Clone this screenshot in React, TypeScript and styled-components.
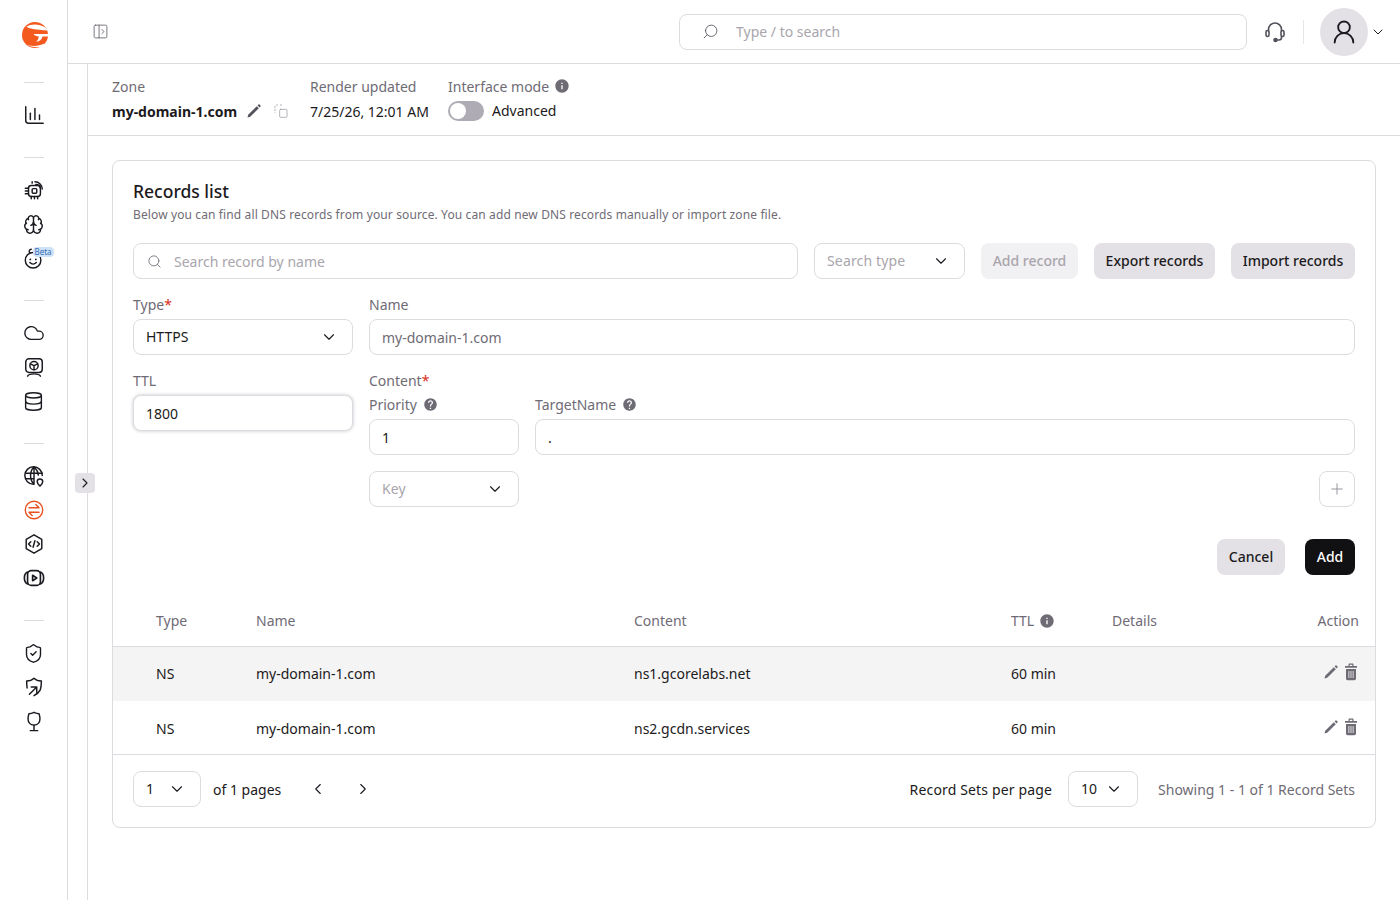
import React from 'react'
import styled, { createGlobalStyle } from 'styled-components'
import { Brain, ChevronDown, ChevronLeft, ChevronRight, Cloud, Database, Plus, Search, ShieldCheck, UserRound } from 'lucide-react'
import { MdHelp, MdInfo } from 'react-icons/md'

const GlobalStyle = createGlobalStyle`
    html, body {
        margin: 0;
        padding: 0;
        background: #fff;
    }
    body {
        font-family: 'Noto Sans', 'Open Sans', sans-serif;
        font-size: 14px;
        color: #1c1a20;
    }
    * {
        box-sizing: border-box;
    }
`

const Glyph: React.FC<{ size?: number; width?: number; children: React.ReactNode }> = ({ size = 22, width = 1.6, children }) => (
    <svg width={size} height={size} viewBox="0 0 24 24" fill="none" stroke="currentColor" strokeWidth={width} strokeLinecap="round" strokeLinejoin="round">
        {children}
    </svg>
)

const Logo = () => (
    <svg width="28" height="30" viewBox="0 0 28 30">
        <circle cx="14" cy="15" r="13" fill="#f4591d" />
        <path d="M5.500 6.500C10 3.800 18 3.500 24.500 7.500 25.500 8.500 26 9.500 26.500 10.500 21 10 16 9.500 12 9 9.500 8.500 7 8 5.500 6.500z" fill="#fff" />
        <path d="M12.500 14h15.500v2.500h-6.500c-.5 3-3 5-6.500 5.500 1.500-1 2.500-3 2.800-5.500-2.300 0-4.300-1-5.300-2.500z" fill="#fff" />
        <path d="M4.500 24C9 26.500 17 26.800 23.500 23.500L22 26.500C17 27.800 10 27.500 4.500 24z" fill="#fff" />
    </svg>
)

const ChartIcon = () => (
    <Glyph>
        <path d="M3 3v15a3 3 0 0 0 3 3h16" />
        <path d="M8 17V10" />
        <path d="M13 17V5" />
        <path d="M18 17v-5" />
    </Glyph>
)

const ChipIcon = () => (
    <Glyph>
        <rect x="6" y="7" width="13" height="12" rx="3" />
        <rect x="10" y="10.500" width="5" height="5" rx="1" />
        <path d="M2.500 10H6M2.500 13H6M2.500 16H6M9 19v2.500M12.500 19v2.500M16 19v2.500" />
        <path d="M10 4.500V3M13 3a8 8 0 0 1 8 8M14 6a5 5 0 0 1 5 4" />
    </Glyph>
)

const SmileIcon = () => (
    <Glyph>
        <circle cx="11" cy="14.500" r="8.500" />
        <path d="M7.500 6.500C6 4.500 7 2.500 9 2.500" />
        <path d="M7.500 17c2 2 5 2 7 0" />
        <path d="M8 13.500v.01M14 13.500v.01" strokeWidth="2" />
    </Glyph>
)

const ScreenIcon = () => (
    <Glyph>
        <rect x="3" y="3" width="18" height="15" rx="3.500" />
        <circle cx="12" cy="10.500" r="4.500" />
        <path d="M8 8.500l4 2 4-2M12 10.500V15" />
        <path d="M5 22c1-2 3-2.500 7-2.500s6 .5 7 2.500" />
    </Glyph>
)

const GlobePinIcon = () => (
    <Glyph>
        <path d="M21 11.500A9.500 9.500 0 1 0 11.500 21" />
        <path d="M12 2c-5 5-5 14 0 19M12 2c3 3 4.500 6 4.700 9M3 9h18M3 15h9M12 2v19" />
        <path d="M18.500 23s3-2.500 3-4.700a3 3 0 0 0-6 0c0 2.200 3 4.700 3 4.700z" fill="#fff" />
    </Glyph>
)

const ExchangeIcon = () => (
    <Glyph width={1.5}>
        <circle cx="12" cy="12" r="9.500" />
        <path d="M6.500 9.500h11L14 6" />
        <path d="M17.500 14.500h-11L10 18" />
    </Glyph>
)

const HexCodeIcon = () => (
    <Glyph>
        <path d="M12 2l8.500 5v10L12 22l-8.500-5V7z" />
        <path d="M8.500 9.500L6 12l2.500 2.500M15.500 9.500L18 12l-2.500 2.500M13 8.500l-2 7" />
    </Glyph>
)

const PlayIcon = () => (
    <Glyph width={1.8}>
        <rect x="5" y="4" width="14" height="16" rx="4" />
        <path d="M10.500 9v6l4.500-3z" />
        <path d="M5 5.500C2.500 6.500 1.500 8 1.500 12s1 5.500 3.500 6.500M19 5.500c2.500 1 3.500 2.500 3.500 6.500s-1 5.500-3.500 6.500" />
    </Glyph>
)

const ShieldArrowIcon = () => (
    <Glyph>
        <path d="M4.500 13C4 10 4 7.500 4 5.500c3 0 6-1 8-3 2 2 5 3 8 3 0 9-1 12-8 16" />
        <path d="M7 20l8-8M9 12h6v6" />
    </Glyph>
)

const BalloonIcon = () => (
    <Glyph>
        <path d="M12 16.500c-4 0-6.500-3-6.500-7 0-2 .5-4 1-5.500 2 0 3.500-.5 5.500-1.500 2 1 3.500 1.500 5.500 1.500.5 1.500 1 3.500 1 5.500 0 4-2.500 7-6.500 7z" />
        <path d="M12 16.500v6M8 22.500h8" />
    </Glyph>
)

const PanelIcon = () => (
    <Glyph size={17} width={1.3}>
        <rect x="3" y="3" width="18" height="18" rx="2" />
        <path d="M10 3v18M14 9l3 3-3 3" />
    </Glyph>
)

const HeadsetIcon = () => (
    <Glyph size={24} width={1.6}>
        <path d="M5.500 11V9.500a6.500 6.500 0 0 1 13 0V11" />
        <rect x="3" y="10.500" width="3" height="6" rx="1.500" />
        <rect x="18" y="10.500" width="3" height="6" rx="1.500" />
        <path d="M18.500 16.500v1a2.500 2.500 0 0 1-2.500 2.500h-2" />
        <circle cx="12.500" cy="20" r="1.500" fill="currentColor" />
    </Glyph>
)

const CopyIcon = () => (
    <Glyph size={16} width={1}>
        <rect x="10" y="9.500" width="11" height="12" rx="1.500" />
        <path d="M7 3H5.500A2.500 2.500 0 0 0 3 5.500V14" strokeDasharray="2 2.500" />
        <path d="M11 3h3" strokeDasharray="2 2" />
    </Glyph>
)

const PencilIcon = () => (
    <svg width="16" height="16" viewBox="0 0 16 16" fill="currentColor">
        <path d="M1.500 14.500l.7-2.700L10.800 3.200l2 2-8.600 8.600z" />
        <path d="M11.600 2.400l.9-.9c.3-.3.7-.3 1 0l1 1c.3.3.3.7 0 1l-.9.9z" />
    </svg>
)

const TrashIcon = () => (
    <svg width="16" height="18" viewBox="0 0 16 18" fill="currentColor">
        <path d="M5.500 1.500c0-.6.4-1 1-1h3c.6 0 1 .4 1 1V3H14v1.700H2V3h3.500zM6.700 1.700V3h2.600V1.700z" />
        <path fillRule="evenodd" d="M3 6h10v9.500c0 1-.7 1.700-1.700 1.700H4.700C3.700 17.200 3 16.500 3 15.500zM5.500 8v7h.8V8zM7.600 8v7h.8V8zM9.700 8v7h.8V8z" />
    </svg>
)

const groups: React.ReactNode[][] = [
    [<ChartIcon />],
    [<ChipIcon />, <Brain size={21} strokeWidth={1.6} />, <SmileIcon />],
    [<Cloud size={22} strokeWidth={1.5} />, <ScreenIcon />, <Database size={21} strokeWidth={1.6} />],
    [<GlobePinIcon />, <ExchangeIcon />, <HexCodeIcon />, <PlayIcon />],
    [<ShieldCheck size={21} strokeWidth={1.6} />, <ShieldArrowIcon />, <BalloonIcon />],
]

const records = [
    { type: 'NS', name: 'my-domain-1.com', content: 'ns1.gcorelabs.net', ttl: '60 min' },
    { type: 'NS', name: 'my-domain-1.com', content: 'ns2.gcdn.services', ttl: '60 min' },
]

const App: React.FC = () => {
    return (
        <>
            <GlobalStyle />
            <Shell>
                <Sidebar>
                    <LogoSlot>
                        <Logo />
                    </LogoSlot>
                    {groups.map((icons, i) => (
                        <React.Fragment key={i}>
                            <SideDivider />
                            <SideGroup>
                                {icons.map((icon, j) => (
                                    <SideItem key={j} $active={i === 3 && j === 1}>
                                        {icon}
                                        {i === 1 && j === 2 && <BetaBadge>Beta</BetaBadge>}
                                    </SideItem>
                                ))}
                            </SideGroup>
                        </React.Fragment>
                    ))}
                </Sidebar>
                <Main>
                    <TopBar>
                        <PanelToggle>
                            <PanelIcon />
                        </PanelToggle>
                        <TopSearch>
                            <FlippedIcon>
                                <Search size={17} strokeWidth={1.2} />
                            </FlippedIcon>
                            <TopSearchInput placeholder="Type / to search" readOnly />
                        </TopSearch>
                        <SupportButton>
                            <HeadsetIcon />
                        </SupportButton>
                        <TopSeparator />
                        <Avatar>
                            <UserRound size={28} strokeWidth={1.6} />
                        </Avatar>
                        <AvatarCaret>
                            <ChevronDown size={16} strokeWidth={1.5} />
                        </AvatarCaret>
                    </TopBar>
                    <Body>
                        <Gutter>
                            <CollapseButton>
                                <ChevronRight size={16} strokeWidth={1.6} />
                            </CollapseButton>
                        </Gutter>
                        <Content>
                            <InfoBar>
                                <InfoColumn $width={198}>
                                    <InfoLabel>Zone</InfoLabel>
                                    <InfoValue>
                                        <ZoneName>my-domain-1.com</ZoneName>
                                        <EditGlyph>
                                            <PencilIcon />
                                        </EditGlyph>
                                        <CopyGlyph>
                                            <CopyIcon />
                                        </CopyGlyph>
                                    </InfoValue>
                                </InfoColumn>
                                <InfoColumn $width={138}>
                                    <InfoLabel>Render updated</InfoLabel>
                                    <InfoValue>7/25/26, 12:01 AM</InfoValue>
                                </InfoColumn>
                                <InfoColumn>
                                    <InfoLabel>
                                        Interface mode
                                        <HintIcon>
                                            <MdInfo size={16} />
                                        </HintIcon>
                                    </InfoLabel>
                                    <InfoValue>
                                        <Toggle>
                                            <ToggleKnob />
                                        </Toggle>
                                        <ToggleText>Advanced</ToggleText>
                                    </InfoValue>
                                </InfoColumn>
                            </InfoBar>
                            <Page>
                                <Card>
                                    <CardHead>
                                        <CardTitle>Records list</CardTitle>
                                        <CardText>Below you can find all DNS records from your source. You can add new DNS records manually or import zone file.</CardText>
                                    </CardHead>
                                    <Toolbar>
                                        <SearchField>
                                            <Search size={15} strokeWidth={1.4} />
                                            <BareInput placeholder="Search record by name" readOnly />
                                        </SearchField>
                                        <SelectBox $width={151} $muted>
                                            Search type
                                            <ChevronDown size={18} strokeWidth={1.5} />
                                        </SelectBox>
                                        <ActionButton $width={97} $variant="disabled">Add record</ActionButton>
                                        <ActionButton $width={121}>Export records</ActionButton>
                                        <ActionButton $width={124}>Import records</ActionButton>
                                    </Toolbar>
                                    <FormRow>
                                        <LeftField>
                                            <FieldLabel>
                                                Type<Required>*</Required>
                                            </FieldLabel>
                                            <SelectBox>
                                                HTTPS
                                                <ChevronDown size={18} strokeWidth={1.5} />
                                            </SelectBox>
                                        </LeftField>
                                        <GrowField>
                                            <FieldLabel>Name</FieldLabel>
                                            <TextInput value="my-domain-1.com" $muted readOnly />
                                        </GrowField>
                                    </FormRow>
                                    <FormRow>
                                        <LeftField>
                                            <FieldLabel>TTL</FieldLabel>
                                            <TextInput value="1800" $focused readOnly />
                                        </LeftField>
                                        <GrowField>
                                            <FieldLabel>
                                                Content<Required>*</Required>
                                            </FieldLabel>
                                            <ParamRow>
                                                <PriorityField>
                                                    <SubLabel>
                                                        Priority
                                                        <HelpIcon>
                                                            <MdHelp size={15} />
                                                        </HelpIcon>
                                                    </SubLabel>
                                                    <TextInput value="1" readOnly />
                                                </PriorityField>
                                                <GrowField>
                                                    <SubLabel>
                                                        TargetName
                                                        <HelpIcon>
                                                            <MdHelp size={15} />
                                                        </HelpIcon>
                                                    </SubLabel>
                                                    <TextInput value="." readOnly />
                                                </GrowField>
                                            </ParamRow>
                                            <KeyRow>
                                                <SelectBox $width={150} $muted>
                                                    Key
                                                    <ChevronDown size={18} strokeWidth={1.5} />
                                                </SelectBox>
                                                <PlusButton>
                                                    <Plus size={18} strokeWidth={1.2} />
                                                </PlusButton>
                                            </KeyRow>
                                        </GrowField>
                                    </FormRow>
                                    <FormActions>
                                        <ActionButton $width={68}>Cancel</ActionButton>
                                        <ActionButton $width={50} $variant="primary">Add</ActionButton>
                                    </FormActions>
                                    <TableHead>
                                        <span>Type</span>
                                        <span>Name</span>
                                        <span>Content</span>
                                        <TtlHead>
                                            TTL
                                            <TtlHint>
                                                <MdInfo size={16} />
                                            </TtlHint>
                                        </TtlHead>
                                        <span>Details</span>
                                        <ActionHead>Action</ActionHead>
                                    </TableHead>
                                    {records.map((record, i) => (
                                        <TableRow key={record.content} $hover={i === 0}>
                                            <span>{record.type}</span>
                                            <span>{record.name}</span>
                                            <span>{record.content}</span>
                                            <span>{record.ttl}</span>
                                            <span />
                                            <RowActions>
                                                <PencilIcon />
                                                <TrashIcon />
                                            </RowActions>
                                        </TableRow>
                                    ))}
                                    <Pagination>
                                        <PagerSide $gap={12}>
                                            <SelectBox $width={68}>
                                                1
                                                <ChevronDown size={18} strokeWidth={1.5} />
                                            </SelectBox>
                                            <span>of 1 pages</span>
                                            <PagerArrows>
                                                <ChevronLeft size={18} strokeWidth={1.5} />
                                                <ChevronRight size={18} strokeWidth={1.5} />
                                            </PagerArrows>
                                        </PagerSide>
                                        <PagerSide $gap={16}>
                                            <PerPageText>Record Sets per page</PerPageText>
                                            <SelectBox $width={70}>
                                                10
                                                <ChevronDown size={18} strokeWidth={1.5} />
                                            </SelectBox>
                                            <ShowingText>Showing 1 - 1 of 1 Record Sets</ShowingText>
                                        </PagerSide>
                                    </Pagination>
                                </Card>
                            </Page>
                        </Content>
                    </Body>
                </Main>
            </Shell>
        </>
    )
}

export default App

const Shell = styled.div`
    display: flex;
    height: 100vh;
    overflow: hidden;
`

const Sidebar = styled.aside`
    width: 68px;
    flex-shrink: 0;
    border-right: 1px solid #dcdbdf;
    display: flex;
    flex-direction: column;
    align-items: center;
`

const LogoSlot = styled.div`
    height: 57px;
    padding: 20px 0 0 2px;
    display: flex;
    justify-content: center;
`

const SideDivider = styled.div`
    width: 20px;
    height: 1px;
    background: #dcdbdf;
    margin: 25px 0 15px;
`

const SideGroup = styled.div`
    display: flex;
    flex-direction: column;
`

const SideItem = styled.div<{ $active?: boolean }>`
    position: relative;
    width: 34px;
    height: 34px;
    display: flex;
    align-items: center;
    justify-content: center;
    color: ${({ $active }) => ($active ? '#e8501f' : '#1c1a20')};
`

const BetaBadge = styled.span`
    position: absolute;
    left: 16px;
    top: 6px;
    height: 10px;
    padding: 0 2px;
    border-radius: 4px;
    background: #cfe2f7;
    color: #2f6fb5;
    font-size: 8px;
    line-height: 10px;
`

const Main = styled.div`
    flex: 1;
    min-width: 0;
    display: flex;
    flex-direction: column;
`

const TopBar = styled.header`
    height: 64px;
    flex-shrink: 0;
    border-bottom: 1px solid #dcdbdf;
    display: flex;
    align-items: center;
    padding-left: 24px;
`

const PanelToggle = styled.div`
    display: flex;
    color: #6f6b75;
    margin-right: 570px;
`

const TopSearch = styled.div`
    width: 568px;
    height: 36px;
    border: 1px solid #dcdbdf;
    border-radius: 8px;
    display: flex;
    align-items: center;
    padding-left: 22px;
    gap: 15px;
    color: #56525c;
`

const FlippedIcon = styled.span`
    display: flex;
    transform: scaleX(-1);
`

const TopSearchInput = styled.input`
    border: none;
    outline: none;
    flex: 1;
    font: inherit;
    &::placeholder {
        color: #a9a5ad;
    }
`

const SupportButton = styled.div`
    display: flex;
    margin-left: 16px;
    color: #56525c;
`

const TopSeparator = styled.div`
    width: 1px;
    height: 24px;
    background: #e6e5e8;
    margin: 0 16px;
`

const Avatar = styled.div`
    width: 48px;
    height: 48px;
    border-radius: 50%;
    background: #e3e1e6;
    display: flex;
    align-items: center;
    justify-content: center;
`

const AvatarCaret = styled.div`
    display: flex;
    margin-left: 2px;
`

const Body = styled.div`
    flex: 1;
    min-height: 0;
    display: flex;
`

const Gutter = styled.div`
    position: relative;
    width: 20px;
    flex-shrink: 0;
    border-right: 1px solid #dcdbdf;
`

const CollapseButton = styled.div`
    position: absolute;
    left: 7px;
    top: 409px;
    width: 20px;
    height: 20px;
    border-radius: 4px;
    background: #e3e1e6;
    display: flex;
    align-items: center;
    justify-content: center;
    color: #1c1a20;
`

const Content = styled.div`
    flex: 1;
    min-width: 0;
    display: flex;
    flex-direction: column;
`

const InfoBar = styled.div`
    height: 72px;
    flex-shrink: 0;
    border-bottom: 1px solid #dcdbdf;
    padding: 12px 24px 0;
    display: flex;
`

const InfoColumn = styled.div<{ $width?: number }>`
    width: ${({ $width }) => ($width ? `${$width}px` : 'auto')};
    display: flex;
    flex-direction: column;
    gap: 5px;
`

const InfoLabel = styled.div`
    display: flex;
    align-items: center;
    gap: 5px;
    height: 20px;
    color: #6f6b75;
`

const InfoValue = styled.div`
    display: flex;
    align-items: center;
    height: 20px;
`

const ZoneName = styled.span`
    font-weight: 700;
`

const EditGlyph = styled.span`
    display: flex;
    margin-left: 9px;
    color: #56525c;
`

const CopyGlyph = styled.span`
    display: flex;
    margin-left: 11px;
    color: #8f8b95;
`

const HintIcon = styled.span`
    display: flex;
    color: #6f6b75;
`

const Toggle = styled.div`
    width: 36px;
    height: 20px;
    border-radius: 10px;
    background: #aeabb4;
    padding: 2px;
    margin-right: 8px;
`

const ToggleKnob = styled.div`
    width: 16px;
    height: 16px;
    border-radius: 50%;
    background: #fff;
`

const ToggleText = styled.span`
    margin-bottom: 2px;
`

const Page = styled.main`
    padding: 24px 24px 0;
`

const Card = styled.section`
    width: 1264px;
    height: 668px;
    border: 1px solid #dcdbdf;
    border-radius: 8px;
    padding-top: 20px;
`

const CardHead = styled.div`
    padding: 0 20px;
`

const CardTitle = styled.h2`
    margin: 0;
    font-size: 17.5px;
    font-weight: 500;
    line-height: 21px;
`

const CardText = styled.p`
    margin: 4px 0 0;
    font-size: 12px;
    line-height: 18px;
    letter-spacing: 0.12px;
    color: #6f6b75;
`

const Toolbar = styled.div`
    display: flex;
    gap: 16px;
    padding: 0 20px;
    margin-top: 19px;
`

const SearchField = styled.div`
    flex: 1;
    height: 36px;
    border: 1px solid #dcdbdf;
    border-radius: 8px;
    display: flex;
    align-items: center;
    gap: 10px;
    padding-left: 13px;
    color: #6f6b75;
`

const BareInput = styled.input`
    flex: 1;
    border: none;
    outline: none;
    font: inherit;
    &::placeholder {
        color: #a9a5ad;
    }
`

const SelectBox = styled.div<{ $width?: number; $muted?: boolean }>`
    width: ${({ $width }) => ($width ? `${$width}px` : '100%')};
    height: 36px;
    flex-shrink: 0;
    border: 1px solid #dcdbdf;
    border-radius: 8px;
    display: flex;
    align-items: center;
    justify-content: space-between;
    padding: 0 14px 1px 12px;
    color: ${({ $muted }) => ($muted ? '#a9a5ad' : '#1c1a20')};
    letter-spacing: ${({ $muted }) => ($muted ? '0.15px' : 'normal')};
    svg {
        color: #1c1a20;
    }
`

const ActionButton = styled.button<{ $width: number; $variant?: 'primary' | 'disabled' }>`
    width: ${({ $width }) => $width}px;
    height: 36px;
    padding: 0 0 2px;
    flex-shrink: 0;
    border: none;
    border-radius: 8px;
    font: inherit;
    font-weight: 500;
    background: ${({ $variant }) =>
        $variant === 'primary' ? '#111012' : $variant === 'disabled' ? '#f1f0f2' : '#e3e1e6'};
    color: ${({ $variant }) =>
        $variant === 'primary' ? '#fff' : $variant === 'disabled' ? '#a9a5ad' : '#1c1a20'};
`

const FormRow = styled.div`
    display: flex;
    gap: 16px;
    padding: 0 20px;
    margin-top: 16px;
`

const LeftField = styled.div`
    width: 220px;
    flex-shrink: 0;
`

const GrowField = styled.div`
    flex: 1;
    min-width: 0;
`

const FieldLabel = styled.div`
    height: 24px;
    line-height: 20px;
    color: #6f6b75;
`

const Required = styled.span`
    color: #d92d20;
`

const TextInput = styled.input<{ $muted?: boolean; $focused?: boolean }>`
    display: block;
    width: 100%;
    height: 36px;
    border: 1px solid #dcdbdf;
    border-radius: 8px;
    padding: 0 12px;
    outline: none;
    font: inherit;
    color: ${({ $muted }) => ($muted ? '#6f6b75' : '#1c1a20')};
    box-shadow: ${({ $focused }) => ($focused ? '0 0 3px 1px #dcdbdf' : 'none')};
`

const ParamRow = styled.div`
    display: flex;
    gap: 16px;
`

const PriorityField = styled.div`
    width: 150px;
    flex-shrink: 0;
`

const SubLabel = styled.div`
    display: flex;
    align-items: center;
    gap: 6px;
    height: 24px;
    padding-bottom: 6px;
    color: #6f6b75;
`

const HelpIcon = styled.span`
    display: flex;
    color: #6f6b75;
`

const KeyRow = styled.div`
    display: flex;
    justify-content: space-between;
    margin-top: 16px;
`

const PlusButton = styled.div`
    width: 36px;
    height: 36px;
    border: 1px solid #dcdbdf;
    border-radius: 8px;
    display: flex;
    align-items: center;
    justify-content: center;
    color: #8f8b95;
`

const FormActions = styled.div`
    display: flex;
    justify-content: flex-end;
    gap: 20px;
    padding: 0 20px;
    margin-top: 32px;
`

const columns = `143px 378px 377px 101px 1fr 100px`

const TableHead = styled.div`
    display: grid;
    grid-template-columns: ${columns};
    align-items: center;
    height: 51px;
    margin-top: 21px;
    padding-bottom: 2px;
    border-bottom: 1px solid #dcdbdf;
    color: #6f6b75;
    & > span:first-child {
        padding-left: 43px;
    }
`

const TtlHead = styled.span`
    display: flex;
    align-items: center;
    gap: 5px;
`

const TtlHint = styled.span`
    display: flex;
    margin-top: 2px;
    color: #6f6b75;
`

const ActionHead = styled.span`
    text-align: right;
    padding-right: 16px;
`

const TableRow = styled.div<{ $hover?: boolean }>`
    display: grid;
    grid-template-columns: ${columns};
    align-items: center;
    height: ${({ $hover }) => ($hover ? '54px' : '53px')};
    padding: ${({ $hover }) => ($hover ? '0 0 1px' : '1px 0 0')};
    background: ${({ $hover }) => ($hover ? '#f4f4f4' : '#fff')};
    & > span:first-child {
        padding-left: 43px;
    }
`

const RowActions = styled.span`
    display: flex;
    justify-content: flex-end;
    align-items: center;
    gap: 4px;
    padding: 0 16px 3px 0;
    color: #6f6b75;
`

const Pagination = styled.div`
    height: 73px;
    border-top: 1px solid #dcdbdf;
    padding: 0 20px 4px;
    display: flex;
    align-items: center;
    justify-content: space-between;
`

const PagerSide = styled.div<{ $gap: number }>`
    display: flex;
    align-items: center;
    gap: ${({ $gap }) => $gap}px;
`

const PagerArrows = styled.div`
    display: flex;
    gap: 27px;
    margin-left: 16px;
`

const PerPageText = styled.span`
    letter-spacing: 0.15px;
`

const ShowingText = styled.span`
    margin-left: 4px;
    color: #6f6b75;
`
